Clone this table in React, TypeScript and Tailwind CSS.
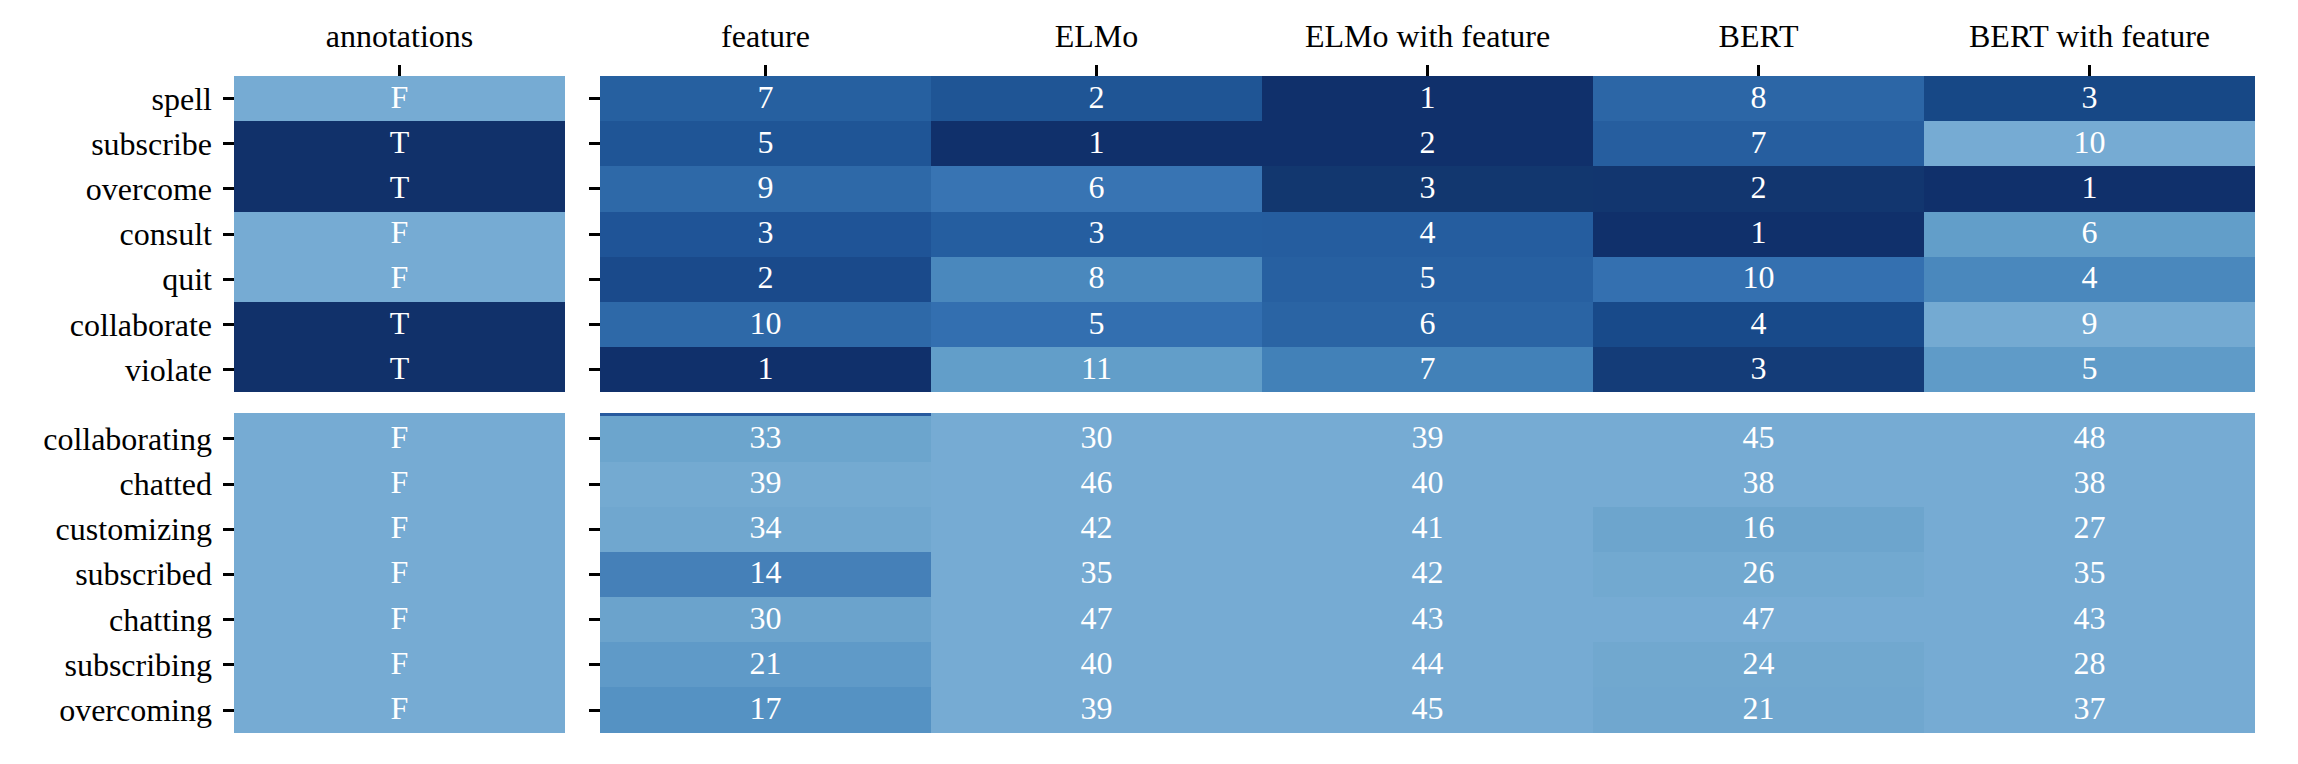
import React from 'react';

const L = '#76abd3';
const D = '#10306b';

const COLUMNS = ['feature', 'ELMo', 'ELMo with feature', 'BERT', 'BERT with feature'];

type Cell = [string, string];

interface Row {
  word:  string;
  annot: 'T' | 'F';
  cells: Cell[];
}

const TOP_ROWS: Row[] = [
  { word: 'spell',       annot: 'F', cells: [['7', '#2660a0'], ['2', '#1f5595'], ['1', D], ['8', '#2c66a6'], ['3', '#174886']] },
  { word: 'subscribe',   annot: 'T', cells: [['5', '#1f5596'], ['1', D], ['2', D], ['7', '#265e9f'], ['10', L]] },
  { word: 'overcome',    annot: 'T', cells: [['9', '#2e69a8'], ['6', '#3874b3'], ['3', '#12376f'], ['2', '#12366f'], ['1', D]] },
  { word: 'consult',     annot: 'F', cells: [['3', '#1f5497'], ['3', '#255ea0'], ['4', '#255d9f'], ['1', D], ['6', '#629ec9']] },
  { word: 'quit',        annot: 'F', cells: [['2', '#1a4a8b'], ['8', '#4a88bd'], ['5', '#2760a1'], ['10', '#3470b0'], ['4', '#4a88bd']] },
  { word: 'collaborate', annot: 'T', cells: [['10', '#2e69a8'], ['5', '#336fb0'], ['6', '#2a64a4'], ['4', '#184a8a'], ['9', '#74aad2']] },
  { word: 'violate',     annot: 'T', cells: [['1', D], ['11', '#629ec9'], ['7', '#4281b8'], ['3', '#143c78'], ['5', '#5f9bc8']] },
];

const BOTTOM_ROWS: Row[] = [
  { word: 'collaborating', annot: 'F', cells: [['33', '#6ca5cd'], ['30', L], ['39', L], ['45', L], ['48', L]] },
  { word: 'chatted',       annot: 'F', cells: [['39', '#74aad1'], ['46', L], ['40', L], ['38', L], ['38', L]] },
  { word: 'customizing',   annot: 'F', cells: [['34', '#70a7cf'], ['42', L], ['41', L], ['16', '#6da5cd'], ['27', L]] },
  { word: 'subscribed',    annot: 'F', cells: [['14', '#4580b8'], ['35', L], ['42', L], ['26', '#72a9d0'], ['35', L]] },
  { word: 'chatting',      annot: 'F', cells: [['30', '#6ba3cc'], ['47', L], ['43', L], ['47', L], ['43', L]] },
  { word: 'subscribing',   annot: 'F', cells: [['21', '#5f9ac8'], ['40', L], ['44', L], ['24', '#71a8cf'], ['28', L]] },
  { word: 'overcoming',    annot: 'F', cells: [['17', '#5592c3'], ['39', L], ['45', L], ['21', '#70a7cf'], ['37', L]] },
];

function HeatCell({ value, color }: { value: string; color: string }) {
  return (
    <div
      className="w-[331px] h-full flex items-center justify-center pb-[4px] text-white"
      style={{ backgroundColor: color }}
    >
      {value}
    </div>
  );
}

function YTick() {
  return <div className="w-[11px] h-[3px] bg-black" />;
}

function HeatRow({ row }: { row: Row }) {
  return (
    <div className="flex items-center h-[45.2px]">
      <div className="w-[212px] text-right text-black">{row.word}</div>
      <div className="w-[11px]" />
      <YTick />
      <HeatCell value={row.annot} color={row.annot === 'T' ? '#11316a' : L} />
      <div className="w-[24px]" />
      <YTick />
      {row.cells.map(([v, c], i) => (
        <HeatCell key={i} value={v} color={c} />
      ))}
    </div>
  );
}

export default function App() {
  return (
    <div className="w-[2298px] h-[764px] bg-white overflow-hidden font-['Liberation_Serif',serif] text-[32px] leading-[32px]">
      {/* column titles */}
      <div className="flex h-[65px] items-end pb-[13px] text-black">
        <div className="w-[234px]" />
        <div className="w-[331px] text-center">annotations</div>
        <div className="w-[35px]" />
        {COLUMNS.map((c) => (
          <div key={c} className="w-[331px] text-center">{c}</div>
        ))}
      </div>

      {/* x ticks */}
      <div className="flex h-[11px]">
        <div className="w-[234px]" />
        <div className="w-[331px] flex justify-center"><div className="w-[3px] h-full bg-black" /></div>
        <div className="w-[35px]" />
        {COLUMNS.map((c) => (
          <div key={c} className="w-[331px] flex justify-center"><div className="w-[3px] h-full bg-black" /></div>
        ))}
      </div>

      <div className="flex flex-col">
        {TOP_ROWS.map((r) => (
          <HeatRow key={r.word} row={r} />
        ))}
      </div>

      <div className="flex flex-col mt-[21px]">
        <div className="flex h-[3px]">
          <div className="w-[234px]" />
          <div className="w-[331px] bg-[#76abd3]" />
          <div className="w-[35px]" />
          <div className="w-[331px] bg-[#275a9e]" />
          <div className="w-[1324px] bg-[#76abd3]" />
        </div>
        {BOTTOM_ROWS.map((r) => (
          <HeatRow key={r.word} row={r} />
        ))}
      </div>
    </div>
  );
}
